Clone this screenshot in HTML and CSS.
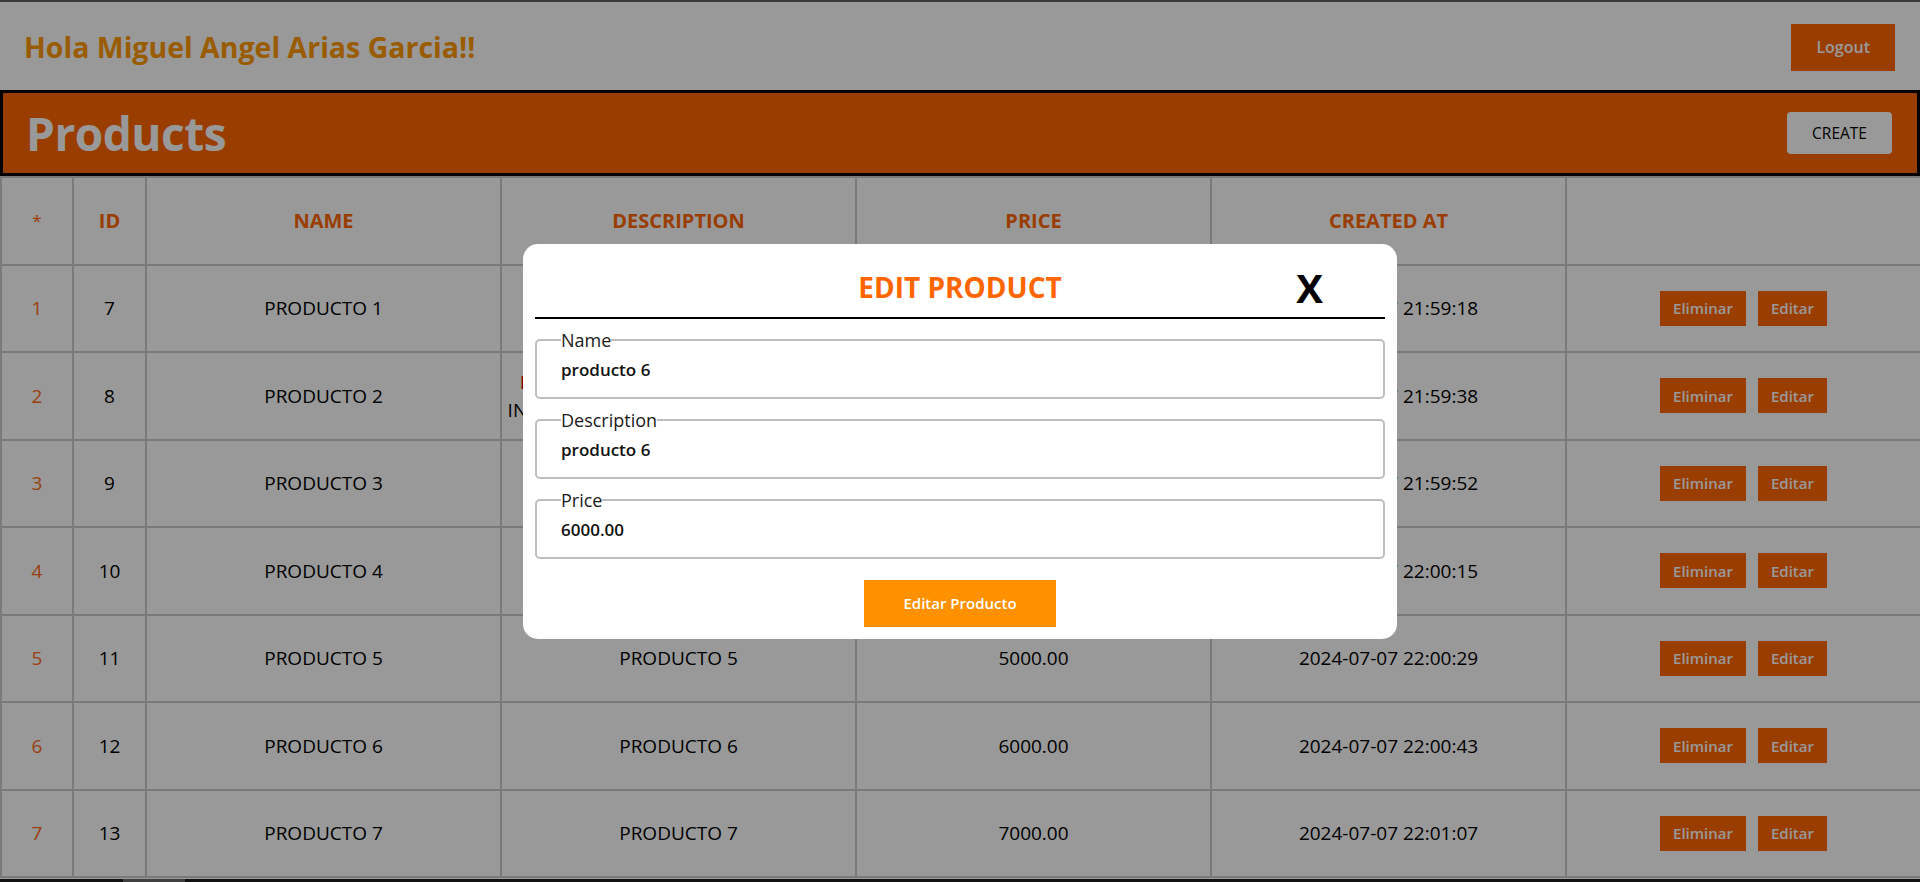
FILE: index.html
```html
<!DOCTYPE html>
<html lang="es">
<head>
<meta charset="utf-8">
<title>Products</title>
<link rel="stylesheet" href="styles.css">
</head>
<body>
<nav class="topbar">
  <h2 class="greeting">Hola Miguel Angel Arias Garcia!!</h2>
  <button class="btn-logout">Logout</button>
</nav>
<section class="products-bar">
  <h1 class="products-title">Products</h1>
  <button class="btn-create">CREATE</button>
</section>
<table class="products-table">
  <colgroup>
    <col class="c-idx"><col class="c-id"><col class="c-wide"><col class="c-wide"><col class="c-wide"><col class="c-wide"><col class="c-wide">
  </colgroup>
  <thead>
    <tr><th class="star">*</th><th>ID</th><th>NAME</th><th>DESCRIPTION</th><th>PRICE</th><th>CREATED AT</th><th></th></tr>
  </thead>
  <tbody>
    <tr><td class="idx">1</td><td>7</td><td>PRODUCTO 1</td><td>PRODUCTO 1</td><td>1000.00</td><td>2024-07-07 21:59:18</td><td><div class="actions"><button class="btn-row">Eliminar</button><button class="btn-row">Editar</button></div></td></tr>
    <tr><td class="idx">2</td><td>8</td><td>PRODUCTO 2</td><td class="multi"><span class="red">DESCRIPCION DEL PRODUCTO DOS.</span><br>INFORMACION ADICIONAL DE PRUEBA</td><td>2000.00</td><td>2024-07-07 21:59:38</td><td><div class="actions"><button class="btn-row">Eliminar</button><button class="btn-row">Editar</button></div></td></tr>
    <tr><td class="idx">3</td><td>9</td><td>PRODUCTO 3</td><td>PRODUCTO 3</td><td>3000.00</td><td>2024-07-07 21:59:52</td><td><div class="actions"><button class="btn-row">Eliminar</button><button class="btn-row">Editar</button></div></td></tr>
    <tr><td class="idx">4</td><td>10</td><td>PRODUCTO 4</td><td>PRODUCTO 4</td><td>4000.00</td><td>2024-07-07 22:00:15</td><td><div class="actions"><button class="btn-row">Eliminar</button><button class="btn-row">Editar</button></div></td></tr>
    <tr><td class="idx">5</td><td>11</td><td>PRODUCTO 5</td><td>PRODUCTO 5</td><td>5000.00</td><td>2024-07-07 22:00:29</td><td><div class="actions"><button class="btn-row">Eliminar</button><button class="btn-row">Editar</button></div></td></tr>
    <tr><td class="idx">6</td><td>12</td><td>PRODUCTO 6</td><td>PRODUCTO 6</td><td>6000.00</td><td>2024-07-07 22:00:43</td><td><div class="actions"><button class="btn-row">Eliminar</button><button class="btn-row">Editar</button></div></td></tr>
    <tr><td class="idx">7</td><td>13</td><td>PRODUCTO 7</td><td>PRODUCTO 7</td><td>7000.00</td><td>2024-07-07 22:01:07</td><td><div class="actions"><button class="btn-row">Eliminar</button><button class="btn-row">Editar</button></div></td></tr>
  </tbody>
</table>
<footer class="footer"><span class="footer-mark"></span></footer>

<div class="overlay">
  <div class="modal">
    <div class="modal-header">
      <h3 class="modal-title">EDIT PRODUCT</h3>
      <button class="modal-close">X</button>
    </div>
    <fieldset class="field">
      <legend>Name</legend>
      <input type="text" value="producto 6">
    </fieldset>
    <fieldset class="field">
      <legend>Description</legend>
      <input type="text" value="producto 6">
    </fieldset>
    <fieldset class="field">
      <legend>Price</legend>
      <input type="text" value="6000.00">
    </fieldset>
    <button class="btn-submit">Editar Producto</button>
  </div>
</div>
</body>
</html>
```
FILE: styles.css
```css
* { box-sizing: border-box; }

html, body {
  margin: 0;
  padding: 0;
  background: #ffffff;
  font-family: "Open Sans", "Noto Sans", sans-serif;
  color: #000;
}

button { font-family: "Open Sans", "Noto Sans", sans-serif; cursor: pointer; }

.topbar {
  display: flex;
  align-items: center;
  justify-content: space-between;
  height: 90px;
  padding: 2px 25px 0 24px;
  border-top: 2px solid #606060;
  background: #fff;
}

.greeting {
  margin: 0;
  font-size: 28.5px;
  font-weight: 700;
  color: #ff9a00;
  line-height: normal;
}

.btn-logout {
  height: 47px;
  padding: 0 25px;
  border: 0;
  background: #ff6600;
  color: #fff;
  font-size: 16px;
  font-weight: 600;
}

.products-bar {
  display: flex;
  align-items: center;
  justify-content: space-between;
  height: 86px;
  padding: 0 25px 0 23px;
  border: 3px solid #000;
  background: #ff6600;
}

.products-title {
  margin: 0;
  font-size: 46px;
  font-weight: 700;
  letter-spacing: -0.5px;
  color: #fff;
  line-height: normal;
}

.btn-create {
  height: 42px;
  padding: 0 25px;
  border: 0;
  border-radius: 4px;
  background: #fff;
  color: #000;
  font-size: 15.5px;
  font-weight: 400;
}

.products-table {
  width: 100%;
  border-collapse: collapse;
  table-layout: fixed;
}

.c-idx { width: 72px; }
.c-id { width: 73px; }
.c-wide { width: 355px; }

.products-table tr { height: 87.5px; }

.products-table th,
.products-table td {
  border: 2px solid #cccccc;
  padding: 0;
  text-align: center;
  vertical-align: middle;
  white-space: nowrap;
}

.products-table th {
  font-size: 20px;
  font-weight: 700;
  color: #ff6600;
}

.products-table th.star {
  font-size: 17px;
  font-weight: 400;
}

.products-table td {
  font-size: 19px;
  font-weight: 400;
  color: #000;
}

.products-table td.idx { color: #ff6a1a; }

.products-table td.multi { line-height: 28px; }

.red { color: #d40000; }

.actions {
  display: flex;
  justify-content: center;
  gap: 12px;
}

.btn-row {
  height: 35px;
  padding: 0 13px;
  border: 0;
  background: #ff6600;
  color: #fff;
  font-size: 15px;
  font-weight: 600;
}

.footer {
  margin-top: 1px;
  height: 60px;
  padding-left: 123px;
  background: #1e1e1e;
}

.footer-mark {
  display: block;
  width: 62px;
  height: 20px;
  background: #6a6a6a;
}

.overlay {
  position: fixed;
  inset: 0;
  background: rgba(0, 0, 0, 0.4);
  display: flex;
  align-items: center;
  justify-content: center;
}

.modal {
  width: 874px;
  padding: 12px;
  background: #fff;
  border-radius: 15px;
}

.modal-header {
  display: grid;
  grid-template-columns: 1fr auto 1fr;
  align-items: center;
  padding: 4px 0 2px;
  border-bottom: 2px solid #000;
}

.modal-title {
  grid-column: 2;
  margin: 0;
  font-size: 28px;
  font-weight: 700;
  color: #ff6600;
  line-height: normal;
}

.modal-close {
  grid-column: 3;
  justify-self: end;
  margin-right: 62px;
  padding: 0;
  border: 0;
  background: none;
  color: #000;
  font-size: 40px;
  font-weight: 700;
  line-height: normal;
}

.field {
  margin: 9px 0 0;
  padding: 6px 24px 16px;
  border: 2px solid #bdbdbd;
  border-radius: 5px;
}

.field legend {
  padding: 0;
  font-size: 18px;
  font-weight: 400;
  color: #1a1a1a;
  line-height: normal;
}

.field input {
  display: block;
  width: 100%;
  height: 23px;
  padding: 0;
  border: 0;
  outline: none;
  background: transparent;
  font-family: "Open Sans", "Noto Sans", sans-serif;
  font-size: 17px;
  font-weight: 600;
  line-height: 23px;
  color: #111;
}

.btn-submit {
  display: block;
  width: 192px;
  height: 47px;
  margin: 21px auto 0;
  border: 0;
  background: #ff9100;
  color: #fff;
  font-size: 15px;
  font-weight: 600;
}
```
